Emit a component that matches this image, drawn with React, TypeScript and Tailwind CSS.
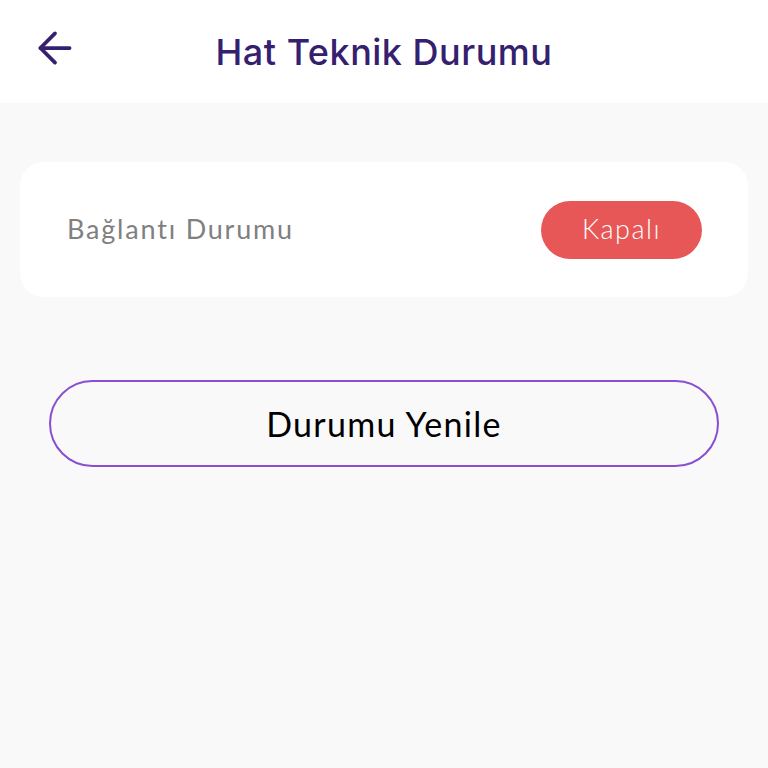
import { ArrowLeft } from 'lucide-react'

export default function App() {
  return (
    <div className="flex h-[768px] w-[768px] flex-col bg-[#f9f9f9] font-['Lato',sans-serif]">
      <header className="relative flex h-[103px] shrink-0 items-center justify-center bg-white">
        <button type="button" className="absolute left-[30px] top-[23px] text-[#35206f]">
          <ArrowLeft size={50} strokeWidth={1.8} />
        </button>
        <h1 className="font-['Inter',sans-serif] text-[36px] font-medium tracking-[0.5px] text-[#35206f]">
          Hat Teknik Durumu
        </h1>
      </header>

      <main className="flex flex-col px-5 pt-[59px]">
        <div className="flex h-[135px] items-center justify-between rounded-[24px] bg-white pl-[47px] pr-[46px]">
          <span className="text-[27px] tracking-[1.8px] text-[#808080]">Bağlantı Durumu</span>
          <span className="flex h-[58px] w-[161px] items-center justify-center rounded-full bg-[#e85757] text-[27px] font-light tracking-[1.5px] text-white">
            Kapalı
          </span>
        </div>

        <button
          type="button"
          className="mx-[29px] mt-[83px] flex h-[87px] items-center justify-center rounded-full border-2 border-[#8a4fd0] text-[34px] tracking-[1.3px] text-black"
        >
          Durumu Yenile
        </button>
      </main>
    </div>
  )
}
